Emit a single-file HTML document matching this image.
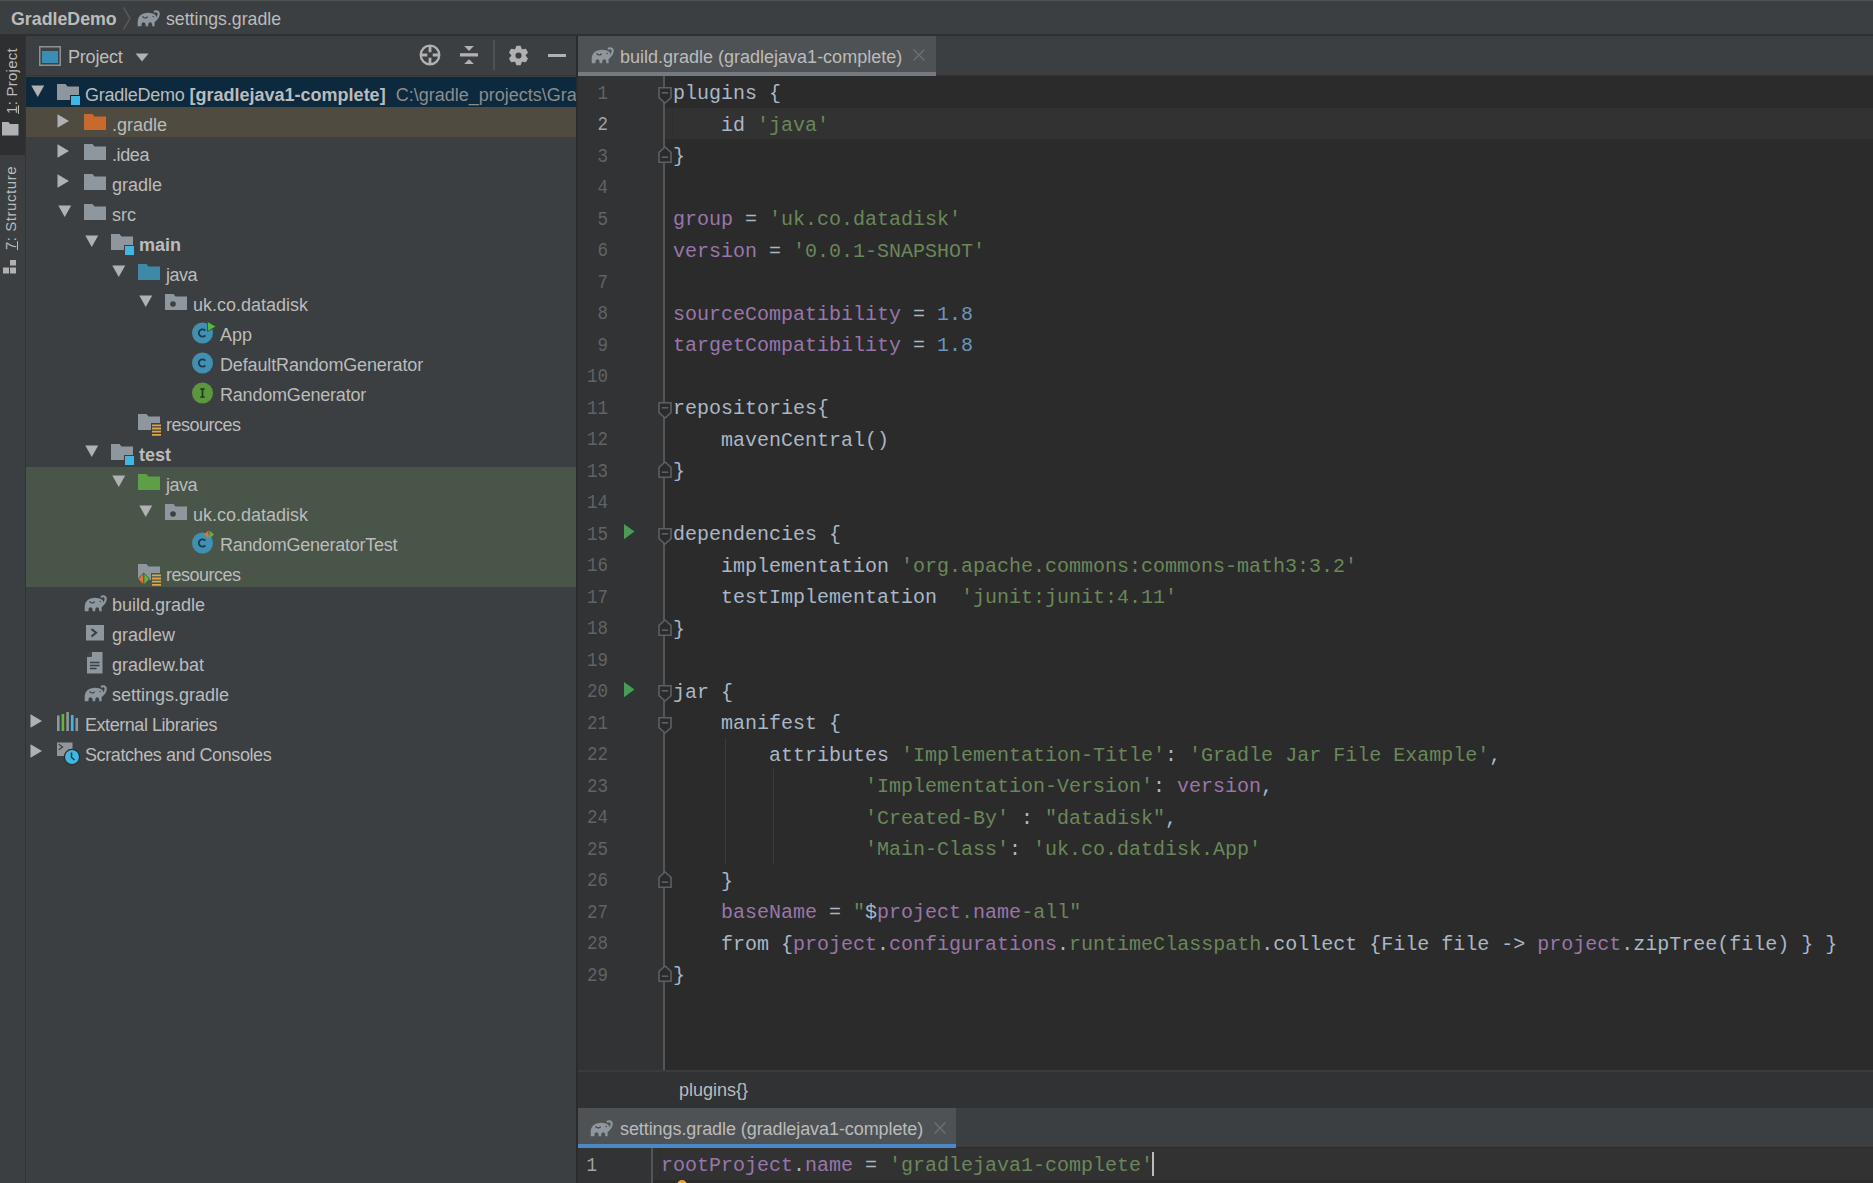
<!DOCTYPE html><html><head><meta charset="utf-8"><style>
*{margin:0;padding:0;box-sizing:border-box}
html,body{width:1873px;height:1183px;overflow:hidden;background:#3C3F41;font-family:"Liberation Sans",sans-serif;color:#BBBBBB}
.a{position:absolute}
svg{position:absolute;overflow:visible}
.tx{position:absolute;height:30px;line-height:30px;font-size:18px;white-space:nowrap;color:#BBBBBB}
.b{font-weight:bold}
.code{position:absolute;font-family:"Liberation Mono",monospace;font-size:20px;line-height:31.5px;white-space:pre;color:#A9B7C6}
.ln{position:absolute;font-family:"Liberation Mono",monospace;font-size:17.5px;line-height:31.5px;color:#606366;text-align:right;width:60px;transform:scaleY(1.14);transform-origin:0 50%}
.s{color:#6A8759}.p{color:#9876AA}.n{color:#6897BB}
</style></head><body>
<svg width="0" height="0" style="position:absolute">
<defs>
<symbol id="fold" viewBox="0 0 22 16"><path d="M0 0H8.5L10.5 2.5H22V16H0Z"/></symbol>
<symbol id="ele" viewBox="0 0 23 17" overflow="visible"><path d="M-0.3 16.3V11.8C-0.3 6.2 3.5 3.1 8.5 2.9C12 2.7 15 3.4 17.1 4.8C18.1 5.6 18.5 6.6 18.3 7.6C18 9 17 10.2 16.6 11.6V16.3H14.2V14.8C14.2 13.3 13.2 12.3 12.2 12.3C11.2 12.3 10.2 13.3 10.2 14.8V16.3H7.6V14.8C7.6 13.3 6.6 12.3 5.5 12.3C4.4 12.3 3.5 13.3 3.5 14.8V16.3Z"/><path d="M16.5 10.8C18.8 8.8 20.8 6.5 20.7 3.6C20.6 1.7 18.7 0.7 16.8 1.6" stroke-width="2.2" stroke-linecap="round" fill="none" stroke="#8E979D"/><path d="M4.6 6.3C5.6 8.4 8.4 8.6 9.6 6.6" stroke="#3C3F41" stroke-width="1.1" fill="none"/><circle cx="15.2" cy="6.5" r="0.7" fill="#3C3F41"/></symbol>
</defs></svg>

<div class="a" style="left:0px;top:0px;width:1873px;height:1px;background:#505354;"></div>
<div class="a" style="left:0px;top:1px;width:1873px;height:33px;background:#3C3F41;"></div>
<div class="a" style="left:0px;top:34px;width:1873px;height:2px;background:#2E3031;"></div>
<div class="tx b" style="left:11px;top:3.5px;font-size:17.8px;color:#BBBBBB">GradleDemo</div>
<svg style="left:122px;top:7px" width="10" height="23"><path d="M1.5 0.5L8 11.5L1.5 22.5" stroke="#5E6062" stroke-width="1.3" fill="none"/></svg>
<svg style="left:138px;top:10px" width="23" height="17" fill="#8E979D"><use href="#ele"/></svg>
<div class="tx" style="left:166px;top:3.5px;font-size:17.7px">settings.gradle</div>
<div class="a" style="left:0px;top:36px;width:25px;height:1147px;background:#3C3F41;"></div>
<div class="a" style="left:0px;top:36px;width:25px;height:119px;background:#2D2F30;"></div>
<div class="a" style="left:25px;top:36px;width:1px;height:1147px;background:#313335;"></div>
<div class="a" style="left:-28.5px;top:70.5px;width:80px;height:20px;transform:rotate(-90deg);font-size:15px;letter-spacing:0.25px;line-height:20px;text-align:center;color:#BBBBBB;white-space:nowrap"><u>1</u>: Project</div>
<svg style="left:2px;top:122px" width="17" height="14" fill="#AFB1B3"><path d="M0 0H6.5L8 2H16.5V13.5H0Z"/></svg>
<div class="a" style="left:-39.5px;top:197.5px;width:100px;height:20px;transform:rotate(-90deg);font-size:15px;letter-spacing:0.55px;line-height:20px;text-align:center;color:#BBBBBB;white-space:nowrap"><u>7</u>: Structure</div>
<svg style="left:3px;top:260px" width="16" height="16" fill="#AFB1B3"><rect x="7" y="0" width="6" height="5.5"/><rect x="0" y="7.5" width="6" height="6"/><rect x="7" y="7.5" width="6" height="6"/></svg>
<div class="a" style="left:26px;top:36px;width:550px;height:1147px;background:#3C3F41;"></div>
<div class="a" style="left:26px;top:75px;width:550px;height:1px;background:#333537;"></div>
<svg style="left:39px;top:46px" width="23" height="21"><rect x="0.75" y="0.75" width="20.5" height="18.5" fill="#3E4244" stroke="#8C9194" stroke-width="1.5"/><rect x="3" y="5" width="16" height="12" fill="#3A8DB4"/></svg>
<div class="tx" style="left:68px;top:41.5px;font-size:18px;letter-spacing:-0.2px">Project</div>
<svg style="left:135px;top:53px" width="14" height="9"><path d="M0.5 0.5H13.5L7 8.5Z" fill="#AFB1B3"/></svg>
<svg style="left:419px;top:44px" width="22" height="22"><circle cx="11" cy="11" r="9.3" stroke="#AFB1B3" stroke-width="2.3" fill="none"/><path d="M11 1.5V8.3M11 13.7V20.5M1.5 11H8.3M13.7 11H20.5" stroke="#AFB1B3" stroke-width="2.8"/></svg>
<svg style="left:460px;top:45px" width="18" height="22" fill="#AFB1B3"><path d="M4.2 1H13.9L9 6Z"/><rect x="0" y="8.2" width="18" height="3.3"/><path d="M4.2 19H13.9L9 14.2Z"/></svg>
<div class="a" style="left:493px;top:40px;width:2px;height:30px;background:#4F5254;"></div>
<svg style="left:507.5px;top:44.5px" width="21" height="21" viewBox="-10.5 -10.5 21 21"><path fill="#AFB1B3" fill-rule="evenodd" d="M-2.08 -9.78 L2.08 -9.78 L3.45 -6.32 L3.75 -6.15 L7.43 -6.70 L9.51 -3.08 L7.20 -0.17 L7.20 0.17 L9.51 3.08 L7.43 6.70 L3.75 6.15 L3.45 6.32 L2.08 9.78 L-2.08 9.78 L-3.45 6.32 L-3.75 6.15 L-7.43 6.70 L-9.51 3.08 L-7.20 0.17 L-7.20 -0.17 L-9.51 -3.08 L-7.43 -6.70 L-3.75 -6.15 L-3.45 -6.32 Z M3.1 0A3.1 3.1 0 1 0 -3.1 0A3.1 3.1 0 1 0 3.1 0Z"/></svg>
<div class="a" style="left:548px;top:54px;width:18px;height:3px;background:#AFB1B3;"></div>
<div class="a" style="left:26px;top:77px;width:550px;height:30px;background:#0D293E;"></div>
<div class="a" style="left:26px;top:107px;width:550px;height:30px;background:#4F4B40;"></div>
<div class="a" style="left:26px;top:467px;width:550px;height:120px;background:#4A5549;"></div>
<svg style="left:30.7px;top:85px" width="14" height="12"><path d="M0.3 0.5H13.2L6.75 12Z" fill="#AFB1B3"/></svg>
<svg style="left:57px;top:84px" width="22" height="16" fill="#8E979D"><use href="#fold"/></svg>
<svg style="left:70px;top:94.5px" width="11" height="11"><rect x="0.5" y="0.5" width="10" height="10" fill="#40B6E0" stroke="#0D293E" stroke-width="1"/></svg>
<div class="tx" style="left:85px;top:79.5px"><span style="letter-spacing:-0.25px">GradleDemo</span> <span class="b">[gradlejava1-complete]</span>&nbsp;&nbsp;<span style="color:#8C8C8C">C:\gradle_projects\GradleDemo</span></div>
<svg style="left:57px;top:114px" width="13" height="14"><path d="M0.5 0.3V13.7L12 7Z" fill="#AFB1B3"/></svg>
<svg style="left:84px;top:114px" width="22" height="16" fill="#C8692E"><use href="#fold"/></svg>
<div class="tx" style="left:112px;top:109.5px;letter-spacing:0">.gradle</div>
<svg style="left:57px;top:144px" width="13" height="14"><path d="M0.5 0.3V13.7L12 7Z" fill="#AFB1B3"/></svg>
<svg style="left:84px;top:144px" width="22" height="16" fill="#8E979D"><use href="#fold"/></svg>
<div class="tx" style="left:112px;top:139.5px;letter-spacing:-0.4px">.idea</div>
<svg style="left:57px;top:174px" width="13" height="14"><path d="M0.5 0.3V13.7L12 7Z" fill="#AFB1B3"/></svg>
<svg style="left:84px;top:174px" width="22" height="16" fill="#8E979D"><use href="#fold"/></svg>
<div class="tx" style="left:112px;top:169.5px;letter-spacing:0">gradle</div>
<svg style="left:57.7px;top:205px" width="14" height="12"><path d="M0.3 0.5H13.2L6.75 12Z" fill="#AFB1B3"/></svg>
<svg style="left:84px;top:204px" width="22" height="16" fill="#8E979D"><use href="#fold"/></svg>
<div class="tx" style="left:112px;top:199.5px;letter-spacing:0">src</div>
<svg style="left:84.7px;top:235px" width="14" height="12"><path d="M0.3 0.5H13.2L6.75 12Z" fill="#AFB1B3"/></svg>
<svg style="left:111px;top:234px" width="22" height="16" fill="#8E979D"><use href="#fold"/></svg>
<svg style="left:124px;top:244.5px" width="11" height="11"><rect x="0.5" y="0.5" width="10" height="10" fill="#40B6E0" stroke="#3C3F41" stroke-width="1"/></svg>
<div class="tx b" style="left:139px;top:229.5px;letter-spacing:0">main</div>
<svg style="left:111.7px;top:265px" width="14" height="12"><path d="M0.3 0.5H13.2L6.75 12Z" fill="#AFB1B3"/></svg>
<svg style="left:138px;top:264px" width="22" height="16" fill="#3E89A8"><use href="#fold"/></svg>
<div class="tx" style="left:166px;top:259.5px;letter-spacing:-0.5px">java</div>
<svg style="left:138.7px;top:295px" width="14" height="12"><path d="M0.3 0.5H13.2L6.75 12Z" fill="#AFB1B3"/></svg>
<svg style="left:165px;top:294px" width="22" height="16" fill="#8E979D"><use href="#fold"/></svg>
<svg style="left:170px;top:301px" width="6" height="6"><circle cx="3" cy="3" r="2.8" fill="#3C3F41"/></svg>
<div class="tx" style="left:193px;top:289.5px;letter-spacing:0">uk.co.datadisk</div>
<svg style="left:191.4px;top:321.2px" width="24" height="24"><circle cx="11.5" cy="12" r="10.5" fill="#4090B2"/><path d="M14.3 9.6A3.7 3.7 0 1 0 14.3 14.4" stroke="#1B3A4B" stroke-width="1.8" fill="none"/></svg>
<svg style="left:206.5px;top:320.5px" width="12" height="12"><path d="M0.5 0.5V10.5L9 5.5Z" fill="#59B93C" stroke="#3C3F41" stroke-width="0.8"/></svg>
<div class="tx" style="left:220px;top:319.5px;letter-spacing:0">App</div>
<svg style="left:191.4px;top:351.2px" width="24" height="24"><circle cx="11.5" cy="12" r="10.5" fill="#4090B2"/><path d="M14.3 9.6A3.7 3.7 0 1 0 14.3 14.4" stroke="#1B3A4B" stroke-width="1.8" fill="none"/></svg>
<div class="tx" style="left:220px;top:349.5px;letter-spacing:-0.14px">DefaultRandomGenerator</div>
<svg style="left:191.4px;top:381.2px" width="24" height="24"><circle cx="11.5" cy="12" r="10.5" fill="#5A973F"/><path d="M9.3 8H13.7M11.5 8V16M9.3 16H13.7" stroke="#1F3A16" stroke-width="1.7" fill="none"/></svg>
<div class="tx" style="left:220px;top:379.5px;letter-spacing:-0.2px">RandomGenerator</div>
<svg style="left:138px;top:414px" width="22" height="16" fill="#8E979D"><use href="#fold"/></svg>
<svg style="left:151px;top:423px" width="12" height="14"><rect x="0" y="0" width="11" height="13.5" fill="#3C3F41"/><path d="M1 2.3H10M1 5.5H10M1 8.7H10M1 11.9H10" stroke="#DCA54A" stroke-width="1.8"/></svg>
<div class="tx" style="left:166px;top:409.5px;letter-spacing:-0.5px">resources</div>
<svg style="left:84.7px;top:445px" width="14" height="12"><path d="M0.3 0.5H13.2L6.75 12Z" fill="#AFB1B3"/></svg>
<svg style="left:111px;top:444px" width="22" height="16" fill="#8E979D"><use href="#fold"/></svg>
<svg style="left:124px;top:454.5px" width="11" height="11"><rect x="0.5" y="0.5" width="10" height="10" fill="#40B6E0" stroke="#3C3F41" stroke-width="1"/></svg>
<div class="tx b" style="left:139px;top:439.5px;letter-spacing:0">test</div>
<svg style="left:111.7px;top:475px" width="14" height="12"><path d="M0.3 0.5H13.2L6.75 12Z" fill="#AFB1B3"/></svg>
<svg style="left:138px;top:474px" width="22" height="16" fill="#5E9E45"><use href="#fold"/></svg>
<div class="tx" style="left:166px;top:469.5px;letter-spacing:-0.5px">java</div>
<svg style="left:138.7px;top:505px" width="14" height="12"><path d="M0.3 0.5H13.2L6.75 12Z" fill="#AFB1B3"/></svg>
<svg style="left:165px;top:504px" width="22" height="16" fill="#8E979D"><use href="#fold"/></svg>
<svg style="left:170px;top:511px" width="6" height="6"><circle cx="3" cy="3" r="2.8" fill="#3C3F41"/></svg>
<div class="tx" style="left:193px;top:499.5px;letter-spacing:0">uk.co.datadisk</div>
<svg style="left:191.4px;top:531.2px" width="24" height="24"><circle cx="11.5" cy="12" r="10.5" fill="#4090B2"/><path d="M14.3 9.6A3.7 3.7 0 1 0 14.3 14.4" stroke="#1B3A4B" stroke-width="1.8" fill="none"/></svg>
<svg style="left:203px;top:530px" width="14" height="10"><path d="M5.5 0.5V8.5L1.2 4.5Z" fill="#E0733A"/><path d="M6.5 0.5V8.5L11 4.5Z" fill="#59B93C"/></svg>
<div class="tx" style="left:220px;top:529.5px;letter-spacing:-0.26px">RandomGeneratorTest</div>
<svg style="left:138px;top:564px" width="22" height="16" fill="#8E979D"><use href="#fold"/></svg>
<svg style="left:151px;top:573px" width="12" height="14"><rect x="0" y="0" width="11" height="13.5" fill="#4A5549"/><path d="M1 2.3H10M1 5.5H10M1 8.7H10M1 11.9H10" stroke="#DCA54A" stroke-width="1.8"/></svg>
<svg style="left:137px;top:572px" width="14" height="14"><path d="M6.8 0.5L13 7L6.8 13.5L0.5 7Z" fill="#4A5549"/><path d="M6.2 2V12L1.5 7Z" fill="#E0733A"/><path d="M7.4 2V12L12 7Z" fill="#59B93C"/></svg>
<div class="tx" style="left:166px;top:559.5px;letter-spacing:-0.5px">resources</div>
<svg style="left:84.5px;top:594.8px" width="23" height="17" fill="#8E979D"><use href="#ele"/></svg>
<div class="tx" style="left:112px;top:589.5px;letter-spacing:0">build.gradle</div>
<svg style="left:86px;top:625px" width="18" height="16"><rect x="0" y="0" width="18" height="15.5" fill="#8E979D"/><path d="M5.5 4L10 7.75L5.5 11.5" stroke="#3C3F41" stroke-width="2.2" fill="none"/></svg>
<div class="tx" style="left:112px;top:619.5px;letter-spacing:0">gradlew</div>
<svg style="left:87.3px;top:652px" width="16" height="22"><path d="M4.5 0H15.5V21.5H0V4.5Z" fill="#8E979D"/><path d="M0 4.5H4.5V0" fill="#3C3F41" stroke="#3C3F41" stroke-width="0.8"/><path d="M3 10.5H12.5M3 13.5H12.5M3 16.5H9.5" stroke="#3C3F41" stroke-width="1.3"/></svg>
<div class="tx" style="left:112px;top:649.5px;letter-spacing:0">gradlew.bat</div>
<svg style="left:84.5px;top:684.8px" width="23" height="17" fill="#8E979D"><use href="#ele"/></svg>
<div class="tx" style="left:112px;top:679.5px;letter-spacing:0">settings.gradle</div>
<svg style="left:30px;top:714px" width="13" height="14"><path d="M0.5 0.3V13.7L12 7Z" fill="#AFB1B3"/></svg>
<svg style="left:57px;top:712px" width="22" height="20"><rect x="0" y="3.5" width="2.6" height="15.5" fill="#8E979D"/><rect x="4.6" y="2" width="2.6" height="17" fill="#62B543"/><rect x="9.3" y="0" width="2.6" height="19" fill="#8E979D"/><rect x="13.9" y="3" width="2.6" height="16" fill="#40B6E0"/><rect x="18.5" y="6" width="2.6" height="13" fill="#8E979D"/></svg>
<div class="tx" style="left:85px;top:709.5px;letter-spacing:-0.45px">External Libraries</div>
<svg style="left:30px;top:744px" width="13" height="14"><path d="M0.5 0.3V13.7L12 7Z" fill="#AFB1B3"/></svg>
<svg style="left:57px;top:742px" width="25" height="28"><rect x="0" y="0.5" width="15.5" height="13.5" fill="#8E979D"/><path d="M1.8 2.2L5.5 5L1.8 7.8" stroke="#3C3F41" stroke-width="1.3" fill="none"/><circle cx="15" cy="15" r="7.6" fill="#40B6E0" stroke="#2B2F33" stroke-width="1.3"/><path d="M14.5 10.5V15.5L17.5 18" stroke="#1B3545" stroke-width="1.5" fill="none"/></svg>
<div class="tx" style="left:85px;top:739.5px;letter-spacing:-0.4px">Scratches and Consoles</div>
<div class="a" style="left:576px;top:36px;width:2px;height:1147px;background:#2B2B2B;"></div>
<div class="a" style="left:578px;top:36px;width:1295px;height:40px;background:#3C3F41;"></div>
<div class="a" style="left:578px;top:75px;width:1295px;height:1px;background:#323232;"></div>
<div class="a" style="left:578px;top:36px;width:358px;height:36px;background:#4E5254;"></div>
<div class="a" style="left:578px;top:72px;width:358px;height:4px;background:#747A80;"></div>
<svg style="left:591.5px;top:47px" width="23" height="17" fill="#8E979D"><use href="#ele"/></svg>
<div class="tx" style="left:620px;top:42px">build.gradle (gradlejava1-complete)</div>
<svg style="left:913px;top:49px" width="12" height="12"><path d="M0.5 0.5L11.5 11.5M11.5 0.5L0.5 11.5" stroke="#6E7174" stroke-width="1.3"/></svg>
<div class="a" style="left:578px;top:76px;width:1295px;height:994px;background:#2B2B2B;"></div>
<div class="a" style="left:578px;top:76px;width:85px;height:994px;background:#313335;"></div>
<div class="a" style="left:665px;top:107.5px;width:1208px;height:31.5px;background:#323232;"></div>
<div class="a" style="left:672px;top:107.5px;width:1px;height:31.5px;background:#2E2E2E;"></div>
<div class="a" style="left:663px;top:76px;width:2px;height:994px;background:#555555;"></div>
<div class="ln" style="left:548px;top:77.5px;color:#606366">1</div>
<div class="code" style="left:673px;top:78.0px">plugins {</div>
<div class="ln" style="left:548px;top:109.0px;color:#A4A3A3">2</div>
<div class="code" style="left:673px;top:109.5px">    id <span class="s">'java'</span></div>
<div class="ln" style="left:548px;top:140.5px;color:#606366">3</div>
<div class="code" style="left:673px;top:141.0px">}</div>
<div class="ln" style="left:548px;top:172.0px;color:#606366">4</div>
<div class="ln" style="left:548px;top:203.5px;color:#606366">5</div>
<div class="code" style="left:673px;top:204.0px"><span class="p">group</span> = <span class="s">'uk.co.datadisk'</span></div>
<div class="ln" style="left:548px;top:235.0px;color:#606366">6</div>
<div class="code" style="left:673px;top:235.5px"><span class="p">version</span> = <span class="s">'0.0.1-SNAPSHOT'</span></div>
<div class="ln" style="left:548px;top:266.5px;color:#606366">7</div>
<div class="ln" style="left:548px;top:298.0px;color:#606366">8</div>
<div class="code" style="left:673px;top:298.5px"><span class="p">sourceCompatibility</span> = <span class="n">1.8</span></div>
<div class="ln" style="left:548px;top:329.5px;color:#606366">9</div>
<div class="code" style="left:673px;top:330.0px"><span class="p">targetCompatibility</span> = <span class="n">1.8</span></div>
<div class="ln" style="left:548px;top:361.0px;color:#606366">10</div>
<div class="ln" style="left:548px;top:392.5px;color:#606366">11</div>
<div class="code" style="left:673px;top:393.0px">repositories{</div>
<div class="ln" style="left:548px;top:424.0px;color:#606366">12</div>
<div class="code" style="left:673px;top:424.5px">    mavenCentral()</div>
<div class="ln" style="left:548px;top:455.5px;color:#606366">13</div>
<div class="code" style="left:673px;top:456.0px">}</div>
<div class="ln" style="left:548px;top:487.0px;color:#606366">14</div>
<div class="ln" style="left:548px;top:518.5px;color:#606366">15</div>
<div class="code" style="left:673px;top:519.0px">dependencies {</div>
<div class="ln" style="left:548px;top:550.0px;color:#606366">16</div>
<div class="code" style="left:673px;top:550.5px">    implementation <span class="s">'org.apache.commons:commons-math3:3.2'</span></div>
<div class="ln" style="left:548px;top:581.5px;color:#606366">17</div>
<div class="code" style="left:673px;top:582.0px">    testImplementation  <span class="s">'junit:junit:4.11'</span></div>
<div class="ln" style="left:548px;top:613.0px;color:#606366">18</div>
<div class="code" style="left:673px;top:613.5px">}</div>
<div class="ln" style="left:548px;top:644.5px;color:#606366">19</div>
<div class="ln" style="left:548px;top:676.0px;color:#606366">20</div>
<div class="code" style="left:673px;top:676.5px">jar {</div>
<div class="ln" style="left:548px;top:707.5px;color:#606366">21</div>
<div class="code" style="left:673px;top:708.0px">    manifest {</div>
<div class="ln" style="left:548px;top:739.0px;color:#606366">22</div>
<div class="code" style="left:673px;top:739.5px">        attributes <span class="s">'Implementation-Title'</span>: <span class="s">'Gradle Jar File Example'</span>,</div>
<div class="ln" style="left:548px;top:770.5px;color:#606366">23</div>
<div class="code" style="left:673px;top:771.0px">                <span class="s">'Implementation-Version'</span>: <span class="p">version</span>,</div>
<div class="ln" style="left:548px;top:802.0px;color:#606366">24</div>
<div class="code" style="left:673px;top:802.5px">                <span class="s">'Created-By'</span> : <span class="s">"datadisk"</span>,</div>
<div class="ln" style="left:548px;top:833.5px;color:#606366">25</div>
<div class="code" style="left:673px;top:834.0px">                <span class="s">'Main-Class'</span>: <span class="s">'uk.co.datdisk.App'</span></div>
<div class="ln" style="left:548px;top:865.0px;color:#606366">26</div>
<div class="code" style="left:673px;top:865.5px">    }</div>
<div class="ln" style="left:548px;top:896.5px;color:#606366">27</div>
<div class="code" style="left:673px;top:897.0px">    <span class="p">baseName</span> = <span class="s">"</span>$<span class="p">project</span><span class="s">.</span><span class="p">name</span><span class="s">-all"</span></div>
<div class="ln" style="left:548px;top:928.0px;color:#606366">28</div>
<div class="code" style="left:673px;top:928.5px">    from {<span class="p">project</span>.<span class="p">configurations</span>.<span class="s">runtimeClasspath</span>.collect {File file -&gt; <span class="p">project</span>.zipTree(file) } }</div>
<div class="ln" style="left:548px;top:959.5px;color:#606366">29</div>
<div class="code" style="left:673px;top:960.0px">}</div>
<svg style="left:658px;top:86.8px" width="15" height="18"><path d="M1 0.8H13V10.6L7 16L1 10.6Z" fill="#2B2B2B" stroke="#5D6062" stroke-width="1.6"/><path d="M3.8 5.8H10.2" stroke="#5D6062" stroke-width="1.6"/></svg>
<svg style="left:658px;top:401.8px" width="15" height="18"><path d="M1 0.8H13V10.6L7 16L1 10.6Z" fill="#2B2B2B" stroke="#5D6062" stroke-width="1.6"/><path d="M3.8 5.8H10.2" stroke="#5D6062" stroke-width="1.6"/></svg>
<svg style="left:658px;top:527.8px" width="15" height="18"><path d="M1 0.8H13V10.6L7 16L1 10.6Z" fill="#2B2B2B" stroke="#5D6062" stroke-width="1.6"/><path d="M3.8 5.8H10.2" stroke="#5D6062" stroke-width="1.6"/></svg>
<svg style="left:658px;top:685.3px" width="15" height="18"><path d="M1 0.8H13V10.6L7 16L1 10.6Z" fill="#2B2B2B" stroke="#5D6062" stroke-width="1.6"/><path d="M3.8 5.8H10.2" stroke="#5D6062" stroke-width="1.6"/></svg>
<svg style="left:658px;top:716.8px" width="15" height="18"><path d="M1 0.8H13V10.6L7 16L1 10.6Z" fill="#2B2B2B" stroke="#5D6062" stroke-width="1.6"/><path d="M3.8 5.8H10.2" stroke="#5D6062" stroke-width="1.6"/></svg>
<svg style="left:658px;top:146.2px" width="15" height="18"><path d="M1 16.2H13V6.4L7 1L1 6.4Z" fill="#2B2B2B" stroke="#5D6062" stroke-width="1.6"/><path d="M3.8 11.2H10.2" stroke="#5D6062" stroke-width="1.6"/></svg>
<svg style="left:658px;top:461.2px" width="15" height="18"><path d="M1 16.2H13V6.4L7 1L1 6.4Z" fill="#2B2B2B" stroke="#5D6062" stroke-width="1.6"/><path d="M3.8 11.2H10.2" stroke="#5D6062" stroke-width="1.6"/></svg>
<svg style="left:658px;top:618.7px" width="15" height="18"><path d="M1 16.2H13V6.4L7 1L1 6.4Z" fill="#2B2B2B" stroke="#5D6062" stroke-width="1.6"/><path d="M3.8 11.2H10.2" stroke="#5D6062" stroke-width="1.6"/></svg>
<svg style="left:658px;top:870.7px" width="15" height="18"><path d="M1 16.2H13V6.4L7 1L1 6.4Z" fill="#2B2B2B" stroke="#5D6062" stroke-width="1.6"/><path d="M3.8 11.2H10.2" stroke="#5D6062" stroke-width="1.6"/></svg>
<svg style="left:658px;top:965.2px" width="15" height="18"><path d="M1 16.2H13V6.4L7 1L1 6.4Z" fill="#2B2B2B" stroke="#5D6062" stroke-width="1.6"/><path d="M3.8 11.2H10.2" stroke="#5D6062" stroke-width="1.6"/></svg>
<svg style="left:624px;top:524.4px" width="12" height="16"><path d="M0 0V15.2L10.5 7.6Z" fill="#499C54"/></svg>
<svg style="left:624px;top:681.9px" width="12" height="16"><path d="M0 0V15.2L10.5 7.6Z" fill="#499C54"/></svg>
<div class="a" style="left:725px;top:737.5px;width:1px;height:126.0px;background:#393B3D;"></div>
<div class="a" style="left:773px;top:769.0px;width:1px;height:94.5px;background:#393B3D;"></div>
<div class="a" style="left:578px;top:1070px;width:1295px;height:2px;background:#3A3B3D;"></div>
<div class="a" style="left:578px;top:1072px;width:1295px;height:36px;background:#313234;"></div>
<div class="tx" style="left:679px;top:1075px;font-size:18px;color:#BBBBBB">plugins{}</div>
<div class="a" style="left:578px;top:1108px;width:1295px;height:39px;background:#3C3F41;"></div>
<div class="a" style="left:578px;top:1108px;width:378px;height:36px;background:#4E5254;"></div>
<div class="a" style="left:578px;top:1144px;width:378px;height:4px;background:#4A88C7;"></div>
<svg style="left:591px;top:1120px" width="23" height="17" fill="#8E979D"><use href="#ele"/></svg>
<div class="tx" style="left:620px;top:1114px;letter-spacing:-0.08px">settings.gradle (gradlejava1-complete)</div>
<svg style="left:934px;top:1122px" width="12" height="12"><path d="M0.5 0.5L11.5 11.5M11.5 0.5L0.5 11.5" stroke="#6E7174" stroke-width="1.3"/></svg>
<div class="a" style="left:578px;top:1147px;width:1295px;height:36px;background:#2B2B2B;"></div>
<div class="a" style="left:578px;top:1147px;width:73px;height:36px;background:#313335;"></div>
<div class="a" style="left:653px;top:1148px;width:1220px;height:32px;background:#323232;"></div>
<div class="a" style="left:651px;top:1147px;width:2px;height:36px;background:#555555;"></div>
<div class="a" style="left:660px;top:1148px;width:1px;height:31px;background:#2E2E2E;"></div>
<div class="a" style="left:578px;top:1144px;width:378px;height:4px;background:#4A88C7;"></div>
<div class="ln" style="left:537px;top:1149.5px;color:#A4A3A3;text-align:right">1</div>
<div class="code" style="left:661px;top:1150px"><span class="p">rootProject</span>.<span class="p">name</span> = <span class="s">'gradlejava1-complete'</span></div>
<div class="a" style="left:1152px;top:1152px;width:2px;height:24px;background:#BBBBBB;"></div>
<svg style="left:676px;top:1179.3px" width="12" height="6"><circle cx="6" cy="6" r="5" fill="#E8A33D"/></svg></body></html>
